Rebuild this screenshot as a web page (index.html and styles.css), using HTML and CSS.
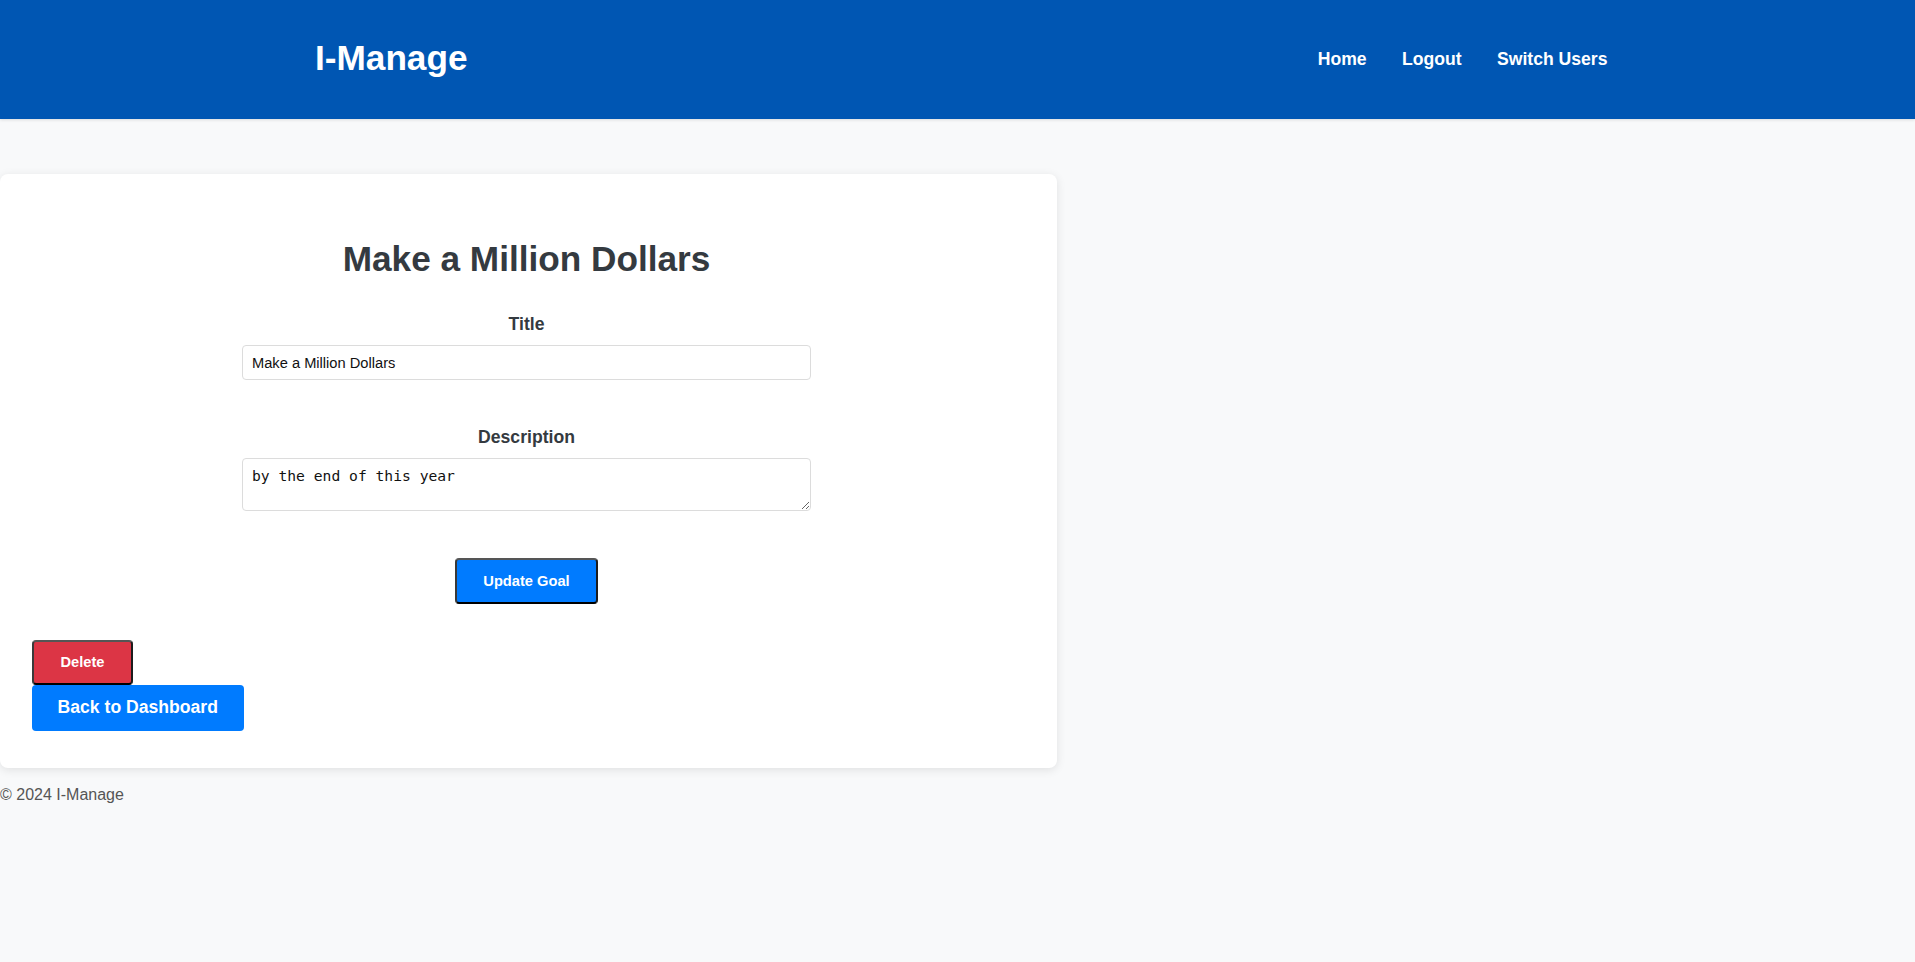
FILE: index.html
```html
<!DOCTYPE html>
<html lang="en">
<head>
<meta charset="utf-8">
<title>I-Manage</title>
<link rel="stylesheet" href="styles.css">
</head>
<body>
<header class="site-header">
  <div class="header-inner">
    <div class="logo">I-Manage</div>
    <nav class="nav">
      <a href="#" class="nav-link">Home</a>
      <a href="#" class="nav-link">Logout</a>
      <a href="#" class="nav-link">Switch Users</a>
    </nav>
  </div>
</header>
<main class="main">
  <section class="card">
    <h2 class="card-title">Make a Million Dollars</h2>
    <form class="goal-form">
      <div class="form-group">
        <label class="form-label" for="title">Title</label>
        <input class="form-input" id="title" type="text" value="Make a Million Dollars">
      </div>
      <div class="form-group form-group-last">
        <label class="form-label" for="desc">Description</label>
        <textarea class="form-textarea" id="desc">by the end of this year</textarea>
      </div>
      <div class="form-actions">
        <button type="button" class="btn btn-primary">Update Goal</button>
      </div>
    </form>
    <form class="delete-form">
      <button type="button" class="btn btn-danger">Delete</button>
    </form>
    <a href="#" class="back-link">Back to Dashboard</a>
  </section>
</main>
<footer class="footer">© 2024 I-Manage</footer>
</body>
</html>
```
FILE: styles.css
```css
* { box-sizing: border-box; }

body {
  margin: 0;
  background: #f8f9fa;
  font-family: "Liberation Sans", Arial, sans-serif;
  color: #343a40;
}

.site-header {
  background: #0056b3;
  height: 119px;
  box-shadow: 0 1px 3px rgba(0, 0, 0, 0.12);
}

.header-inner {
  max-width: 1300px;
  height: 100%;
  margin: 0 auto;
  display: flex;
  align-items: center;
  justify-content: space-between;
}

.logo {
  color: #fff;
  font-weight: bold;
  font-size: 35.2px;
  padding-left: 7.5px;
  margin-bottom: 3px;
}

.nav {
  display: flex;
  gap: 35.4px;
}

.nav-link {
  color: #fff;
  text-decoration: none;
  font-weight: bold;
  font-size: 17.6px;
}

.main {
  padding-top: 55px;
}

.card {
  width: 1057px;
  background: #fff;
  border-radius: 8px;
  box-shadow: 0 2px 10px rgba(0, 0, 0, 0.1);
  padding: 32.5px 36px 37px 32px;
}

.card-title {
  text-align: center;
  font-size: 35.2px;
  font-weight: bold;
  color: #343a40;
  margin: 32.2px 0 35.8px;
}

.goal-form {
  width: 569px;
  margin: 0 auto 36.5px;
}

.form-group {
  margin-bottom: 47.4px;
}

.form-group-last {
  margin-bottom: 47px;
}

.form-label {
  display: block;
  text-align: center;
  font-weight: bold;
  font-size: 17.6px;
  color: #343a40;
  margin-bottom: 9.6px;
}

.form-input,
.form-textarea {
  display: block;
  width: 100%;
  border: 1px solid #dcdcdc;
  border-radius: 4px;
  padding: 8px 9px;
  background: #fff;
  color: #111;
}

.form-input {
  height: 35px;
  font-family: "Liberation Sans", Arial, sans-serif;
  font-size: 14.67px;
}

.form-textarea {
  height: 53px;
  font-family: "DejaVu Sans Mono", monospace;
  font-size: 14.67px;
  resize: vertical;
}

.form-actions {
  display: flex;
  justify-content: center;
}

.btn {
  font-family: "Liberation Sans", Arial, sans-serif;
  font-weight: bold;
  font-size: 14.67px;
  color: #fff;
  padding: 12.8px 26.5px;
  border-width: 2px;
  border-style: solid;
  border-color: #555 #1c1c1c #000 #3a3a3a;
  border-radius: 4px;
  cursor: pointer;
}

.btn-primary { background: #007bff; }
.btn-danger { background: #dc3545; }

.delete-form {
  margin: 0;
}

.delete-form .btn {
  display: block;
  padding: 12.2px 26.5px;
}

.back-link {
  display: inline-block;
  background: #007bff;
  color: #fff;
  text-decoration: none;
  font-weight: bold;
  font-size: 17.6px;
  padding: 12.8px 25.6px;
  border-radius: 4px;
}

.footer {
  padding-top: 18px;
  font-size: 16px;
  color: #555;
}
```
